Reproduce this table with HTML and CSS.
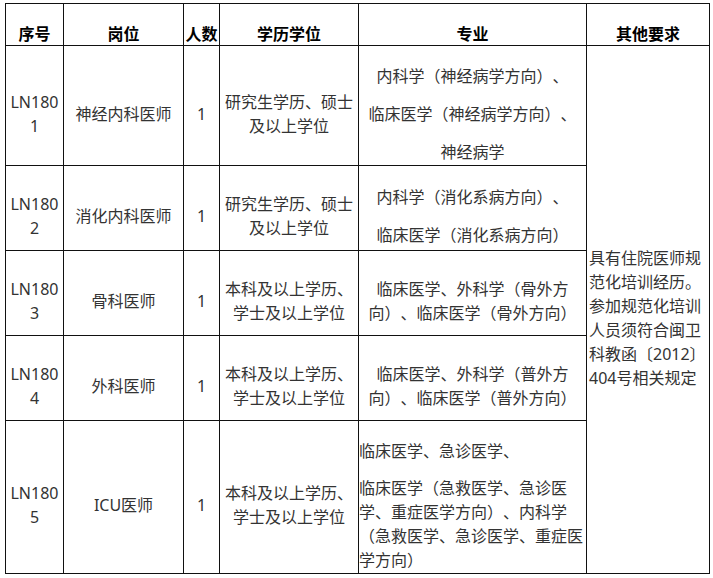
FILE: index.html
```html
<!DOCTYPE html>
<html lang="zh-CN">
<head>
<meta charset="utf-8">
<title>招聘岗位</title>
<link rel="stylesheet" href="styles.css">
</head>
<body>
<table class="recruit">
  <colgroup>
    <col class="c-no">
    <col class="c-post">
    <col class="c-num">
    <col class="c-edu">
    <col class="c-major">
    <col class="c-other">
  </colgroup>
  <thead>
    <tr class="r-head">
      <th>序号</th>
      <th>岗位</th>
      <th>人数</th>
      <th>学历学位</th>
      <th>专业</th>
      <th>其他要求</th>
    </tr>
  </thead>
  <tbody>
    <tr class="r-1">
      <td>LN180<br>1</td>
      <td>神经内科医师</td>
      <td>1</td>
      <td>研究生学历、硕士<br>及以上学位</td>
      <td class="major">
        <div class="ln gap">内科学（神经病学方向）、</div>
        <div class="ln gap">临床医学（神经病学方向）、</div>
        <div class="ln">神经病学</div>
      </td>
      <td class="other" rowspan="5">具有住院医师规<br>范化培训经历。<br>参加规范化培训<br>人员须符合闽卫<br>科教函〔2012〕<br>404号相关规定</td>
    </tr>
    <tr class="r-2">
      <td>LN180<br>2</td>
      <td>消化内科医师</td>
      <td>1</td>
      <td>研究生学历、硕士<br>及以上学位</td>
      <td class="major">
        <div class="ln gap">内科学（消化系病方向）、</div>
        <div class="ln">临床医学（消化系病方向）</div>
      </td>
    </tr>
    <tr class="r-3">
      <td>LN180<br>3</td>
      <td>骨科医师</td>
      <td>1</td>
      <td>本科及以上学历、<br>学士及以上学位</td>
      <td class="major">临床医学、外科学（骨外方<br>向）、临床医学（骨外方向）</td>
    </tr>
    <tr class="r-4">
      <td>LN180<br>4</td>
      <td>外科医师</td>
      <td>1</td>
      <td>本科及以上学历、<br>学士及以上学位</td>
      <td class="major">临床医学、外科学（普外方<br>向）、临床医学（普外方向）</td>
    </tr>
    <tr class="r-5">
      <td>LN180<br>5</td>
      <td>ICU医师</td>
      <td>1</td>
      <td>本科及以上学历、<br>学士及以上学位</td>
      <td class="major left">
        <div class="ln gap-s">临床医学、急诊医学、</div>
        <div class="ln">临床医学（急救医学、急诊医<br>学、重症医学方向）、内科学<br>（急救医学、急诊医学、重症医<br>学方向）</div>
      </td>
    </tr>
  </tbody>
</table>
</body>
</html>
```

FILE: styles.css
```css
html, body {
  margin: 0;
  padding: 0;
  background: #ffffff;
}

body {
  font-family: "Noto Sans", "Noto Sans CJK SC", sans-serif;
  font-size: 16px;
  color: #333333;
}

.recruit {
  margin: 3px 0 0 5px;
  width: 704px;
  table-layout: fixed;
  border-collapse: collapse;
  text-spacing-trim: space-all;
  font-kerning: none;
}

.c-no { width: 58px; }
.c-post { width: 120px; }
.c-num { width: 36px; }
.c-edu { width: 139px; }
.c-major { width: 228px; }
.c-other { width: 123px; }

.recruit th,
.recruit td {
  border: 1px solid #111111;
  padding: 16px 0 0 0;
  text-align: center;
  vertical-align: middle;
  line-height: 24px;
  white-space: nowrap;
  overflow: hidden;
}

.recruit th {
  font-weight: 700;
  color: #000000;
  font-family: "Noto Sans CJK SC", sans-serif;
}

.r-head { height: 42px; }
.r-1 { height: 120px; }
.r-2 { height: 85px; }
.r-3 { height: 85px; }
.r-4 { height: 85px; }
.r-5 { height: 153px; }

.ln {
  line-height: 24px;
}

.gap {
  margin-bottom: 14px;
}

.gap-s {
  margin-bottom: 13px;
}

.recruit td.left {
  text-align: left;
}

.recruit td.other {
  text-align: left;
  padding-left: 2px;
}
```
